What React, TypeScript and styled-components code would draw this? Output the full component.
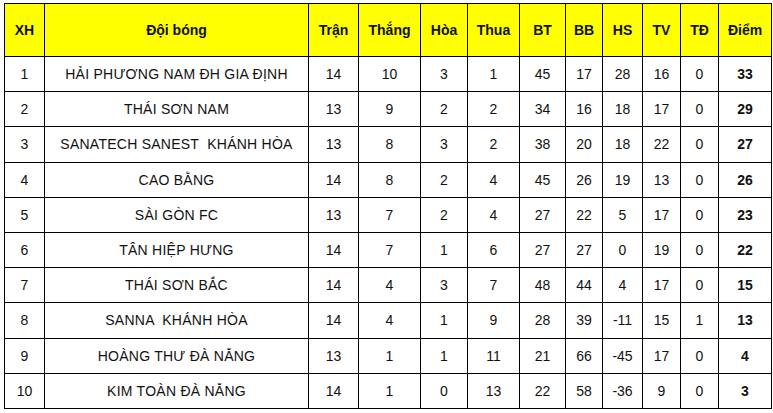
import React from 'react';
import styled, { createGlobalStyle } from 'styled-components';

const GlobalStyle = createGlobalStyle`
  html, body {
    margin: 0;
    padding: 0;
    background: #fff;
  }
  body {
    font-family: 'Liberation Sans', Arial, sans-serif;
    color: #111;
  }
`;

const Page = styled.div`
  padding: 3px 0 0 4px;
`;

const Table = styled.table`
  border-collapse: collapse;
  table-layout: fixed;
  width: 767px;
  font-size: 14px;
`;

const HeadCell = styled.th`
  height: 52px;
  padding: 0;
  background: #ffff00;
  border: 1px solid #000;
  font-weight: bold;
  text-align: center;
  vertical-align: middle;
  color: #111;
`;

const Cell = styled.td<{ $bold?: boolean; $name?: boolean }>`
  height: 34.2px;
  padding: 0;
  border: 1px solid #000;
  text-align: center;
  vertical-align: middle;
  font-weight: ${(p) => (p.$bold ? 'bold' : 'normal')};
  letter-spacing: ${(p) => (p.$name ? '0.25px' : 'normal')};
  white-space: pre;
`;

const columns = [
  { label: 'XH', width: 40 },
  { label: 'Đội bóng', width: 264 },
  { label: 'Trận', width: 50 },
  { label: 'Thắng', width: 62 },
  { label: 'Hòa', width: 47 },
  { label: 'Thua', width: 52 },
  { label: 'BT', width: 46 },
  { label: 'BB', width: 37 },
  { label: 'HS', width: 40 },
  { label: 'TV', width: 38 },
  { label: 'TĐ', width: 38 },
  { label: 'Điểm', width: 53 },
];

type Row = [number, string, number, number, number, number, number, number, number, number, number, number];

const rows: Row[] = [
  [1, 'HẢI PHƯƠNG NAM ĐH GIA ĐỊNH', 14, 10, 3, 1, 45, 17, 28, 16, 0, 33],
  [2, 'THÁI SƠN NAM', 13, 9, 2, 2, 34, 16, 18, 17, 0, 29],
  [3, 'SANATECH SANEST  KHÁNH HÒA', 13, 8, 3, 2, 38, 20, 18, 22, 0, 27],
  [4, 'CAO BẰNG', 14, 8, 2, 4, 45, 26, 19, 13, 0, 26],
  [5, 'SÀI GÒN FC', 13, 7, 2, 4, 27, 22, 5, 17, 0, 23],
  [6, 'TÂN HIỆP HƯNG', 14, 7, 1, 6, 27, 27, 0, 19, 0, 22],
  [7, 'THÁI SƠN BẮC', 14, 4, 3, 7, 48, 44, 4, 17, 0, 15],
  [8, 'SANNA  KHÁNH HÒA', 14, 4, 1, 9, 28, 39, -11, 15, 1, 13],
  [9, 'HOÀNG THƯ ĐÀ NẴNG', 13, 1, 1, 11, 21, 66, -45, 17, 0, 4],
  [10, 'KIM TOÀN ĐÀ NẴNG', 14, 1, 0, 13, 22, 58, -36, 9, 0, 3],
];

export default function App() {
  return (
    <>
      <GlobalStyle />
      <Page>
        <Table>
          <colgroup>
            {columns.map((c) => (
              <col key={c.label} style={{ width: c.width }} />
            ))}
          </colgroup>
          <thead>
            <tr>
              {columns.map((c) => (
                <HeadCell key={c.label}>{c.label}</HeadCell>
              ))}
            </tr>
          </thead>
          <tbody>
            {rows.map((r) => (
              <tr key={r[0]}>
                {r.map((v, i) => (
                  <Cell key={i} $bold={i === r.length - 1} $name={i === 1}>
                    {v}
                  </Cell>
                ))}
              </tr>
            ))}
          </tbody>
        </Table>
      </Page>
    </>
  );
}
